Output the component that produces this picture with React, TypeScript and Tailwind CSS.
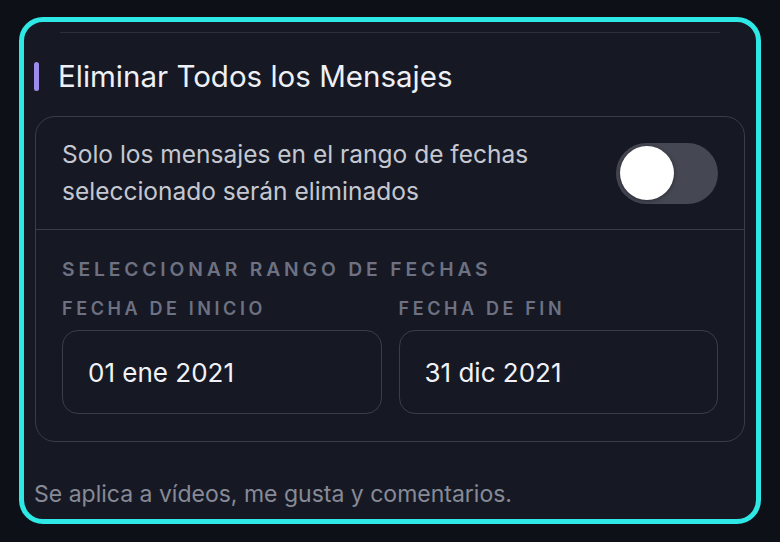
export default function App() {
  return (
    <div
      className="w-full h-[542px] bg-[#0e1018] pt-[17px] pl-[19px]"
      style={{ fontFamily: 'Inter, "Noto Sans", sans-serif' }}
    >
      <div className="w-[742px] h-[507px] border-[5px] border-[#2ee8e6] rounded-[24px] bg-[#161924] px-[10px]">
        {/* leftover divider from the previous section */}
        <div className="mt-[10px] mx-[26px] h-px bg-[#2b2f3b]" />

        <div className="mt-[23px] flex items-center h-[40px]">
          <div className="w-[5px] h-[29px] rounded-full bg-[#9c8bea]" />
          <h2 className="ml-[19px] text-[29.5px] leading-[40px] text-[#eef0f6] font-normal">
            Eliminar Todos los Mensajes
          </h2>
        </div>

        <div className="mt-[20px] ml-px w-[710px] border border-[#393d4a] rounded-[20px]">
          <div className="h-[112px] flex items-center justify-between pl-[26px] pr-[26px]">
            <p className="text-[24.5px] leading-[37px] text-[#c5c8d1]">
              Solo los mensajes en el rango de fechas
              <br />
              seleccionado serán eliminados
            </p>
            <button className="w-[102px] h-[61px] rounded-full bg-[#454753] p-[4px] flex items-center">
              <span className="w-[54px] h-[54px] rounded-full bg-white shadow-[0_1px_4px_rgba(0,0,0,0.4)]" />
            </button>
          </div>

          <div className="border-t border-[#393d4a] px-[26px] pt-[27px] pb-[27px]">
            <div className="text-[19.3px] leading-[24px] font-semibold tracking-[0.2em] text-[#6d7182]">
              SELECCIONAR RANGO DE FECHAS
            </div>
            <div className="mt-[16px] grid grid-cols-2 gap-[17px]">
              <div>
                <div className="text-[18px] leading-[24px] font-semibold tracking-[0.2em] text-[#6d7182]">
                  FECHA DE INICIO
                </div>
                <div className="mt-[9px] h-[84px] border border-[#393d4a] rounded-[16px] flex items-center pl-[25px] text-[26px] text-[#f1f2f7]">
                  01 ene 2021
                </div>
              </div>
              <div>
                <div className="text-[18px] leading-[24px] font-semibold tracking-[0.2em] text-[#6d7182]">
                  FECHA DE FIN
                </div>
                <div className="mt-[9px] h-[84px] border border-[#393d4a] rounded-[16px] flex items-center pl-[25px] text-[26px] text-[#f1f2f7]">
                  31 dic 2021
                </div>
              </div>
            </div>
          </div>
        </div>

        <p className="mt-[38px] text-[23px] leading-[28px] text-[#878a97]">
          Se aplica a vídeos, me gusta y comentarios.
        </p>
      </div>
    </div>
  );
}
